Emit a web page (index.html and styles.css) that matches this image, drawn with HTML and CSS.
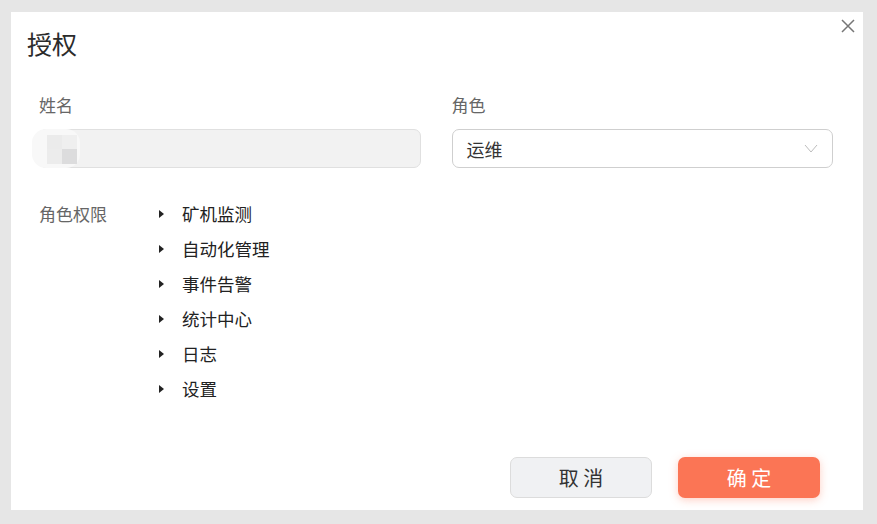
FILE: index.html
```html
<!DOCTYPE html>
<html lang="zh-CN">
<head>
  <meta charset="UTF-8" />
  <meta name="viewport" content="width=device-width, initial-scale=1.0" />
  <title>授权</title>
  <link rel="stylesheet" href="styles.css">
</head>
<body>
  <div class="dialog">
    <button class="close" aria-label="关闭">
      <svg width="14" height="14" viewBox="0 0 14 14"><path d="M1 1L13 13M13 1L1 13" stroke="#767676" stroke-width="1.5" fill="none"/></svg>
    </button>

    <div class="dialog-header">授权</div>

    <!-- Name and role -->
    <div class="form-row">
      <div class="field">
        <div class="label">姓名</div>
        <div class="input readonly">
          <span class="masked"><i></i><i></i><i></i><i></i></span>
        </div>
      </div>
      <div class="field">
        <div class="label">角色</div>
        <div class="input select">
          <span>运维</span>
          <svg width="14" height="9" viewBox="0 0 14 9"><path d="M1 1L7 8L13 1" stroke="#bdbdbd" stroke-width="1" fill="none"/></svg>
        </div>
      </div>
    </div>

    <!-- Permission tree -->
    <div class="perm-row">
      <div class="label perm-label">角色权限</div>
      <ul class="tree">
        <li><span class="caret"></span>矿机监测</li>
        <li><span class="caret"></span>自动化管理</li>
        <li><span class="caret"></span>事件告警</li>
        <li><span class="caret"></span>统计中心</li>
        <li><span class="caret"></span>日志</li>
        <li><span class="caret"></span>设置</li>
      </ul>
    </div>

    <div class="dialog-footer">
      <button class="btn btn-cancel">取 消</button>
      <button class="btn btn-primary">确 定</button>
    </div>
  </div>
</body>
</html>
```

FILE: styles.css
```css
body {
  margin: 0;
  background: #e6e6e6;
  font-family: "Noto Sans CJK SC", "Noto Sans", sans-serif;
  color: #333;
}
.dialog {
  position: relative;
  margin: 12px 0 0 11px;
  width: 852px;
  height: 498px;
  background: #fff;
  box-sizing: border-box;
  display: flex;
  flex-direction: column;
}
.close {
  position: absolute;
  top: 7px;
  right: 8px;
  padding: 0;
  border: none;
  background: none;
  width: 14px;
  height: 14px;
  cursor: pointer;
}
.close svg {
  display: block;
}
.dialog-header {
  padding: 14px 16px 0;
  font-size: 25px;
  line-height: 34px;
  color: #2b2b2b;
}
.form-row {
  display: flex;
  gap: 31px;
  padding: 33px 30px 0 28px;
}
.field {
  flex: 1;
}
.label {
  font-size: 17px;
  line-height: 24px;
  color: #666;
}
.input {
  margin-top: 12px;
  height: 39px;
  box-sizing: border-box;
  border: 1px solid #d9d9d9;
  border-radius: 7px;
  display: flex;
  align-items: center;
  padding: 0 14px;
  font-size: 18px;
  color: #333;
}
.readonly {
  background: #f2f2f2;
  border-color: #e0e0e0;
  padding-left: 0;
}
.masked {
  display: grid;
  grid-template-columns: 15px 15px;
  grid-template-rows: 14px 15px;
  margin-left: -8px;
  width: 48px;
  height: 39px;
  border-radius: 14px;
  background: #f8f8f8;
  padding: 6px 0 0 15px;
  box-sizing: border-box;
  filter: blur(0.5px);
}
.masked i {
  display: block;
  background: #ebebeb;
}
.masked i:nth-child(2) {
  background: #efefef;
}
.masked i:nth-child(3) {
  background: #ececec;
}
.masked i:nth-child(4) {
  background: #dcdcdd;
}
.select {
  justify-content: space-between;
  border-color: #cfcfcf;
}
.perm-row {
  display: flex;
  padding: 28px 0 0 28px;
}
.perm-label {
  width: 120px;
  line-height: 35px;
}
.tree {
  list-style: none;
  margin: 0;
  padding: 0;
}
.tree li {
  display: flex;
  align-items: center;
  height: 35px;
  font-size: 17.5px;
  color: #222;
}
.caret {
  width: 0;
  height: 0;
  border-left: 5px solid #222;
  border-top: 4px solid transparent;
  border-bottom: 4px solid transparent;
  margin-right: 18px;
}
.dialog-footer {
  margin-top: auto;
  display: flex;
  justify-content: flex-end;
  gap: 26px;
  padding: 0 43px 12px 0;
}
.btn {
  width: 142px;
  height: 41px;
  border-radius: 7px;
  font-family: inherit;
  font-size: 20px;
  cursor: pointer;
}
.btn-cancel {
  background: #f0f1f3;
  border: 1px solid #dcdcdc;
  color: #333;
}
.btn-primary {
  background: #fb7555;
  border: none;
  color: #fff;
  box-shadow: 0 2px 8px rgba(251, 117, 85, 0.35);
}
```
